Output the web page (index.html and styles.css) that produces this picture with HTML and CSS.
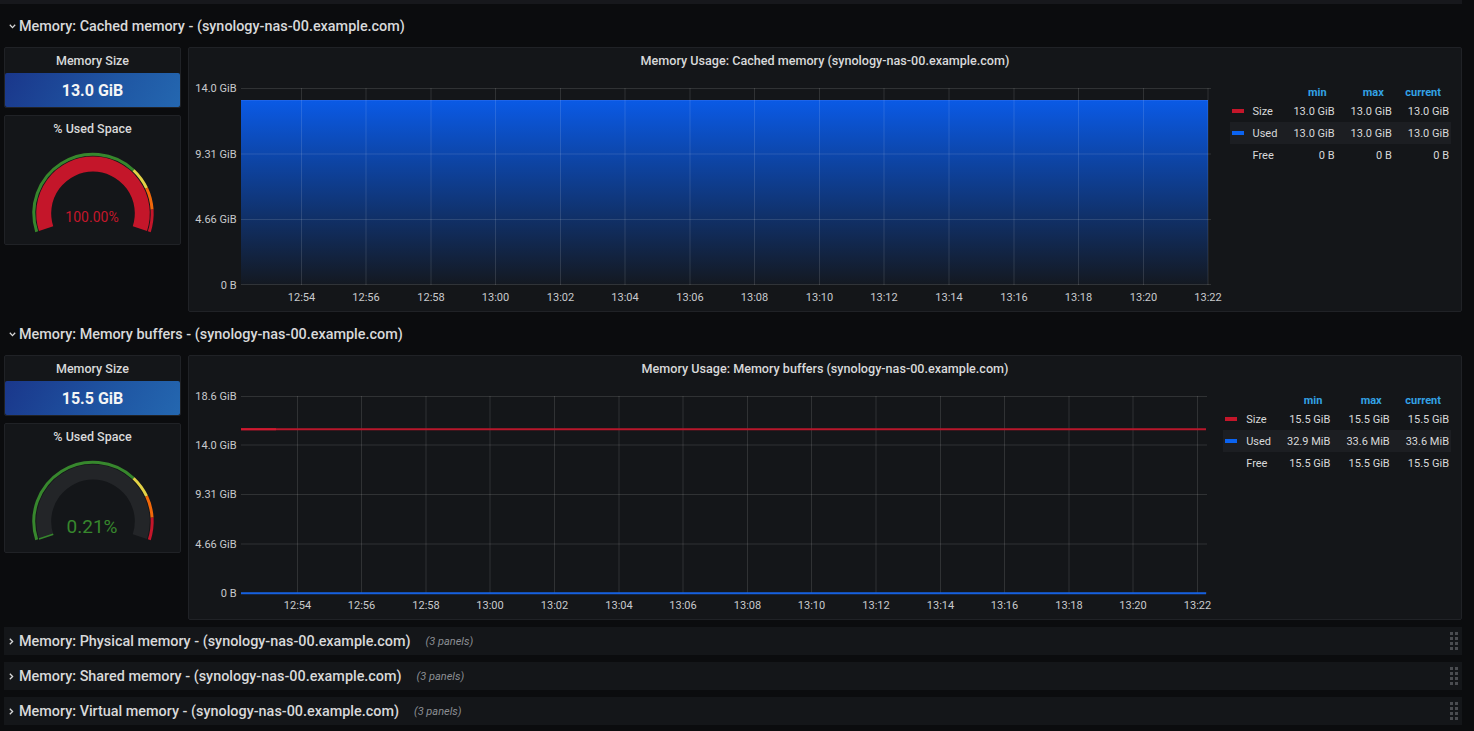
FILE: index.html
```html
<!DOCTYPE html>
<html>
<head>
<meta charset="utf-8">
<title>Memory</title>
<link rel="stylesheet" href="styles.css">
</head>
<body>
<div class="page">
  <div class="top-strip"></div>

  <div class="row-title">
    <svg class="chev-down" width="7" height="5" viewBox="0 0 7 5"><polyline points="0.8,0.8 3.5,3.6 6.2,0.8" fill="none" stroke="#d8d9da" stroke-width="1.3"/></svg>
    <span>Memory: Cached memory - (synology-nas-00.example.com)</span>
  </div>
  <div class="row-content">
    <div class="side">
      <div class="panel stat">
        <div class="panel-title">Memory Size</div>
        <div class="stat-value">13.0 GiB</div>
      </div>
      <div class="panel gauge">
        <div class="panel-title">% Used Space</div>
        <svg class="gauge-svg" width="175" height="103" viewBox="0 0 175 103">
          <path d="M41.11 87.64 A49.3 49.3 0 1 1 134.89 87.64" fill="none" stroke="#c4162a" stroke-width="15"/>
          <path d="M31.70 90.69 A59.2 59.2 0 0 1 128.53 29.25" fill="none" stroke="#37872d" stroke-width="3"/>
          <path d="M128.53 29.25 A59.2 59.2 0 0 1 141.57 47.19" fill="none" stroke="#e3d246" stroke-width="3"/>
          <path d="M141.57 47.19 A59.2 59.2 0 0 1 147.08 68.68" fill="none" stroke="#f2680a" stroke-width="3"/>
          <path d="M147.08 68.68 A59.2 59.2 0 0 1 144.30 90.69" fill="none" stroke="#c4162a" stroke-width="3"/>
          <text x="87" y="80.5" class="gauge-val red">100.00%</text>
        </svg>
      </div>
    </div>
    <div class="panel graph">
      <div class="panel-title">Memory Usage: Cached memory (synology-nas-00.example.com)</div>
      <div class="graph-body">
        <svg class="chart chart-a" width="1036" height="237" viewBox="0 0 1036 237">
          <defs>
            <linearGradient id="fillA" x1="0" y1="0" x2="0" y2="1">
              <stop offset="0" stop-color="#0a5ae6" stop-opacity="1"/>
              <stop offset="1" stop-color="#0a5ae6" stop-opacity="0.04"/>
            </linearGradient>
          </defs>
          <rect x="52" y="26" width="967" height="184.5" fill="url(#fillA)"/>
          <line x1="52" y1="26.5" x2="1019" y2="26.5" stroke="#1d64ea" stroke-width="1"/>
          <g stroke="rgba(255,255,255,0.12)" stroke-width="1">
            <line x1="52" y1="14.5" x2="1022" y2="14.5"/>
            <line x1="52" y1="80" x2="1022" y2="80"/>
            <line x1="52" y1="145.5" x2="1022" y2="145.5"/>
            <line x1="52" y1="210.5" x2="1022" y2="210.5"/>
            <line x1="112.5" y1="14" x2="112.5" y2="211"/>
            <line x1="177" y1="14" x2="177" y2="211"/>
            <line x1="242" y1="14" x2="242" y2="211"/>
            <line x1="306.5" y1="14" x2="306.5" y2="211"/>
            <line x1="371.5" y1="14" x2="371.5" y2="211"/>
            <line x1="436" y1="14" x2="436" y2="211"/>
            <line x1="501" y1="14" x2="501" y2="211"/>
            <line x1="565.5" y1="14" x2="565.5" y2="211"/>
            <line x1="630.5" y1="14" x2="630.5" y2="211"/>
            <line x1="695" y1="14" x2="695" y2="211"/>
            <line x1="760" y1="14" x2="760" y2="211"/>
            <line x1="825" y1="14" x2="825" y2="211"/>
            <line x1="889.5" y1="14" x2="889.5" y2="211"/>
            <line x1="954.5" y1="14" x2="954.5" y2="211"/>
            <line x1="1019" y1="14" x2="1019" y2="211"/>
          </g>
          <g class="ylab">
            <text x="47.5" y="18">14.0 GiB</text>
            <text x="47.5" y="83.7">9.31 GiB</text>
            <text x="47.5" y="149">4.66 GiB</text>
            <text x="47.5" y="214.5">0 B</text>
          </g>
          <g class="xlab">
            <text x="112.5" y="227">12:54</text>
            <text x="177" y="227">12:56</text>
            <text x="242" y="227">12:58</text>
            <text x="306.5" y="227">13:00</text>
            <text x="371.5" y="227">13:02</text>
            <text x="436" y="227">13:04</text>
            <text x="501" y="227">13:06</text>
            <text x="565.5" y="227">13:08</text>
            <text x="630.5" y="227">13:10</text>
            <text x="695" y="227">13:12</text>
            <text x="760" y="227">13:14</text>
            <text x="825" y="227">13:16</text>
            <text x="889.5" y="227">13:18</text>
            <text x="954.5" y="227">13:20</text>
            <text x="1019" y="227">13:22</text>
          </g>
        </svg>
        <div class="legend">
          <table>
            <tr class="head"><th></th><th></th><th>min</th><th>max</th><th>current</th></tr>
            <tr><td class="sw"><span class="swatch red-bg"></span></td><td class="name">Size</td><td>13.0 GiB</td><td>13.0 GiB</td><td>13.0 GiB</td></tr>
            <tr class="hl"><td class="sw"><span class="swatch blue-bg"></span></td><td class="name">Used</td><td>13.0 GiB</td><td>13.0 GiB</td><td>13.0 GiB</td></tr>
            <tr><td class="sw"></td><td class="name">Free</td><td>0 B</td><td>0 B</td><td>0 B</td></tr>
          </table>
        </div>
      </div>
    </div>
  </div>

  <div class="row-title">
    <svg class="chev-down" width="7" height="5" viewBox="0 0 7 5"><polyline points="0.8,0.8 3.5,3.6 6.2,0.8" fill="none" stroke="#d8d9da" stroke-width="1.3"/></svg>
    <span>Memory: Memory buffers - (synology-nas-00.example.com)</span>
  </div>
  <div class="row-content">
    <div class="side">
      <div class="panel stat">
        <div class="panel-title">Memory Size</div>
        <div class="stat-value">15.5 GiB</div>
      </div>
      <div class="panel gauge">
        <div class="panel-title">% Used Space</div>
        <svg class="gauge-svg" width="175" height="103" viewBox="0 0 175 103">
          <path d="M41.11 87.64 A49.3 49.3 0 1 1 134.89 87.64" fill="none" stroke="#232528" stroke-width="15"/>
          <line x1="48.25" y1="85.32" x2="33.98" y2="89.95" stroke="#37872d" stroke-width="1.6"/>
          <path d="M31.70 90.69 A59.2 59.2 0 0 1 128.53 29.25" fill="none" stroke="#37872d" stroke-width="3"/>
          <path d="M128.53 29.25 A59.2 59.2 0 0 1 141.57 47.19" fill="none" stroke="#e3d246" stroke-width="3"/>
          <path d="M141.57 47.19 A59.2 59.2 0 0 1 147.08 68.68" fill="none" stroke="#f2680a" stroke-width="3"/>
          <path d="M147.08 68.68 A59.2 59.2 0 0 1 144.30 90.69" fill="none" stroke="#c4162a" stroke-width="3"/>
          <text x="87" y="84" class="gauge-val green big">0.21%</text>
        </svg>
      </div>
    </div>
    <div class="panel graph">
      <div class="panel-title">Memory Usage: Memory buffers (synology-nas-00.example.com)</div>
      <div class="graph-body">
        <svg class="chart chart-b" width="1026" height="237" viewBox="0 0 1026 237">
          <g stroke="rgba(255,255,255,0.12)" stroke-width="1">
            <line x1="52" y1="14.5" x2="1018" y2="14.5"/>
            <line x1="52" y1="63" x2="1018" y2="63"/>
            <line x1="52" y1="112.5" x2="1018" y2="112.5"/>
            <line x1="52" y1="162" x2="1018" y2="162"/>
            <line x1="52" y1="211" x2="1018" y2="211"/>
            <line x1="108.5" y1="14" x2="108.5" y2="211"/>
            <line x1="172.5" y1="14" x2="172.5" y2="211"/>
            <line x1="237" y1="14" x2="237" y2="211"/>
            <line x1="301" y1="14" x2="301" y2="211"/>
            <line x1="365.5" y1="14" x2="365.5" y2="211"/>
            <line x1="430" y1="14" x2="430" y2="211"/>
            <line x1="494" y1="14" x2="494" y2="211"/>
            <line x1="558.5" y1="14" x2="558.5" y2="211"/>
            <line x1="622.5" y1="14" x2="622.5" y2="211"/>
            <line x1="687" y1="14" x2="687" y2="211"/>
            <line x1="751.5" y1="14" x2="751.5" y2="211"/>
            <line x1="815.5" y1="14" x2="815.5" y2="211"/>
            <line x1="880" y1="14" x2="880" y2="211"/>
            <line x1="944" y1="14" x2="944" y2="211"/>
            <line x1="1008.5" y1="14" x2="1008.5" y2="211"/>
          </g>
          <line x1="52" y1="47.3" x2="1017" y2="47.3" stroke="#b8172b" stroke-width="2"/>
          <line x1="52" y1="47.3" x2="87" y2="47.3" stroke="#d01a30" stroke-width="2"/>
          <line x1="52" y1="211.3" x2="1017" y2="211.3" stroke="#1560e0" stroke-width="2"/>
          <g class="ylab">
            <text x="47.5" y="18">18.6 GiB</text>
            <text x="47.5" y="66.5">14.0 GiB</text>
            <text x="47.5" y="116">9.31 GiB</text>
            <text x="47.5" y="165.5">4.66 GiB</text>
            <text x="47.5" y="214.5">0 B</text>
          </g>
          <g class="xlab">
            <text x="108.5" y="226.7">12:54</text>
            <text x="172.5" y="226.7">12:56</text>
            <text x="237" y="226.7">12:58</text>
            <text x="301" y="226.7">13:00</text>
            <text x="365.5" y="226.7">13:02</text>
            <text x="430" y="226.7">13:04</text>
            <text x="494" y="226.7">13:06</text>
            <text x="558.5" y="226.7">13:08</text>
            <text x="622.5" y="226.7">13:10</text>
            <text x="687" y="226.7">13:12</text>
            <text x="751.5" y="226.7">13:14</text>
            <text x="815.5" y="226.7">13:16</text>
            <text x="880" y="226.7">13:18</text>
            <text x="944" y="226.7">13:20</text>
            <text x="1008.5" y="226.7">13:22</text>
          </g>
        </svg>
        <div class="legend">
          <table>
            <tr class="head"><th></th><th></th><th>min</th><th>max</th><th>current</th></tr>
            <tr><td class="sw"><span class="swatch red-bg"></span></td><td class="name">Size</td><td>15.5 GiB</td><td>15.5 GiB</td><td>15.5 GiB</td></tr>
            <tr class="hl"><td class="sw"><span class="swatch blue-bg"></span></td><td class="name">Used</td><td>32.9 MiB</td><td>33.6 MiB</td><td>33.6 MiB</td></tr>
            <tr><td class="sw"></td><td class="name">Free</td><td>15.5 GiB</td><td>15.5 GiB</td><td>15.5 GiB</td></tr>
          </table>
        </div>
      </div>
    </div>
  </div>

  <div class="row-collapsed">
    <svg class="chev-right" width="5" height="7" viewBox="0 0 5 7"><polyline points="0.8,0.8 3.6,3.5 0.8,6.2" fill="none" stroke="#d8d9da" stroke-width="1.3"/></svg>
    <span>Memory: Physical memory - (synology-nas-00.example.com)</span>
    <span class="count">(3 panels)</span>
    <svg class="drag" width="8" height="18" viewBox="0 0 8 18"><g fill="#4a4c50"><rect x="0" y="0" width="3" height="3"/><rect x="5" y="0" width="3" height="3"/><rect x="0" y="5" width="3" height="3"/><rect x="5" y="5" width="3" height="3"/><rect x="0" y="10" width="3" height="3"/><rect x="5" y="10" width="3" height="3"/><rect x="0" y="15" width="3" height="3"/><rect x="5" y="15" width="3" height="3"/></g></svg>
  </div>
  <div class="row-collapsed">
    <svg class="chev-right" width="5" height="7" viewBox="0 0 5 7"><polyline points="0.8,0.8 3.6,3.5 0.8,6.2" fill="none" stroke="#d8d9da" stroke-width="1.3"/></svg>
    <span>Memory: Shared memory - (synology-nas-00.example.com)</span>
    <span class="count">(3 panels)</span>
    <svg class="drag" width="8" height="18" viewBox="0 0 8 18"><g fill="#4a4c50"><rect x="0" y="0" width="3" height="3"/><rect x="5" y="0" width="3" height="3"/><rect x="0" y="5" width="3" height="3"/><rect x="5" y="5" width="3" height="3"/><rect x="0" y="10" width="3" height="3"/><rect x="5" y="10" width="3" height="3"/><rect x="0" y="15" width="3" height="3"/><rect x="5" y="15" width="3" height="3"/></g></svg>
  </div>
  <div class="row-collapsed">
    <svg class="chev-right" width="5" height="7" viewBox="0 0 5 7"><polyline points="0.8,0.8 3.6,3.5 0.8,6.2" fill="none" stroke="#d8d9da" stroke-width="1.3"/></svg>
    <span>Memory: Virtual memory - (synology-nas-00.example.com)</span>
    <span class="count">(3 panels)</span>
    <svg class="drag" width="8" height="18" viewBox="0 0 8 18"><g fill="#4a4c50"><rect x="0" y="0" width="3" height="3"/><rect x="5" y="0" width="3" height="3"/><rect x="0" y="5" width="3" height="3"/><rect x="5" y="5" width="3" height="3"/><rect x="0" y="10" width="3" height="3"/><rect x="5" y="10" width="3" height="3"/><rect x="0" y="15" width="3" height="3"/><rect x="5" y="15" width="3" height="3"/></g></svg>
  </div>
</div>
</body>
</html>
```

FILE: styles.css
```css
* { box-sizing: border-box; }
html, body {
  margin: 0;
  padding: 0;
  background: #0b0c0e;
}
body {
  font-family: Roboto, "Noto Sans", "Liberation Sans", sans-serif;
  color: #d8d9da;
  width: 1474px;
  height: 731px;
  overflow: hidden;
}
.page { width: 1462px; }
.top-strip { height: 4px; background: #17181c; }

.row-title {
  display: flex;
  align-items: center;
  height: 28px;
  margin-top: 8px;
  padding-left: 9px;
  font-size: 14.4px;
  font-weight: 500;
  white-space: nowrap;
}
.chev-down { display: block; margin-right: 3px; }

.row-content {
  display: flex;
  gap: 7px;
  padding-left: 4px;
  margin-top: 7px;
}
.side {
  width: 177px;
  flex: none;
  display: flex;
  flex-direction: column;
  gap: 7px;
}
.panel {
  background: #141619;
  border: 1px solid #202226;
  border-radius: 2px;
}
.panel-title {
  height: 25px;
  line-height: 25px;
  text-align: center;
  font-size: 12.5px;
  font-weight: 500;
  white-space: nowrap;
  color: #d8d9da;
}
.stat {
  height: 61px;
  display: flex;
  flex-direction: column;
}
.stat-value {
  flex: 1;
  display: flex;
  align-items: center;
  justify-content: center;
  background: linear-gradient(120deg, #1a378b 0%, #1f56a3 60%, #2467b0 100%);
  border-radius: 2px;
  font-size: 16px;
  font-weight: 700;
  color: #f4f5f5;
}
.gauge { height: 130px; }
.gauge-svg { display: block; }
.gauge-val {
  font-family: Roboto, "Noto Sans", "Liberation Sans", sans-serif;
  font-size: 14px;
  text-anchor: middle;
}
.gauge-val.big { font-size: 19px; }
.red { fill: #c4162a; }
.green { fill: #37872d; }

.graph {
  flex: 1;
  height: 265px;
  display: flex;
  flex-direction: column;
}
.graph .panel-title { height: 26px; line-height: 26px; font-size: 12.6px; }
.graph-body { flex: 1; display: flex; }
.chart { display: block; flex: none; height: 237px; }
.chart-a { width: 1036px; }
.chart-b { width: 1026px; }
.ylab text {
  font-size: 11px;
  fill: #c8cacd;
  text-anchor: end;
}
.xlab text {
  font-size: 11px;
  fill: #c8cacd;
  text-anchor: middle;
}

.legend {
  flex: 1;
  display: flex;
  justify-content: flex-end;
  align-items: flex-start;
  padding: 10px 10px 0 0;
}
.legend table {
  border-collapse: collapse;
  font-size: 11px;
}
.legend th {
  height: 16px;
  padding: 0 8px 0 0;
  text-align: right;
  color: #33a2e5;
  font-weight: 700;
}
.legend th:last-child { padding-right: 10px; }
.legend td {
  height: 22px;
  padding: 0 0 0 16px;
  text-align: right;
  white-space: nowrap;
  color: #d8d9da;
}
.legend td:last-child { padding-right: 2px; }
.legend td.sw { padding: 0 0 0 2px; width: 14px; }
.legend td.name { text-align: left; padding-left: 9px; }
.legend tr.hl td { background: #1c1e22; }
.swatch { display: block; width: 12px; height: 4px; }
.red-bg { background: #c4162a; }
.blue-bg { background: #0b63f0; }

.row-collapsed {
  display: flex;
  align-items: center;
  height: 28px;
  margin: 7px 0 0 4px;
  padding: 0 4px 0 5px;
  background: #141619;
  font-size: 14.4px;
  font-weight: 500;
  white-space: nowrap;
}
.chev-right { display: block; margin-right: 5px; }
.count {
  margin-left: 15px;
  font-size: 11px;
  font-style: italic;
  font-weight: 400;
  color: #8b8e93;
}
.drag { display: block; margin-left: auto; }
```
